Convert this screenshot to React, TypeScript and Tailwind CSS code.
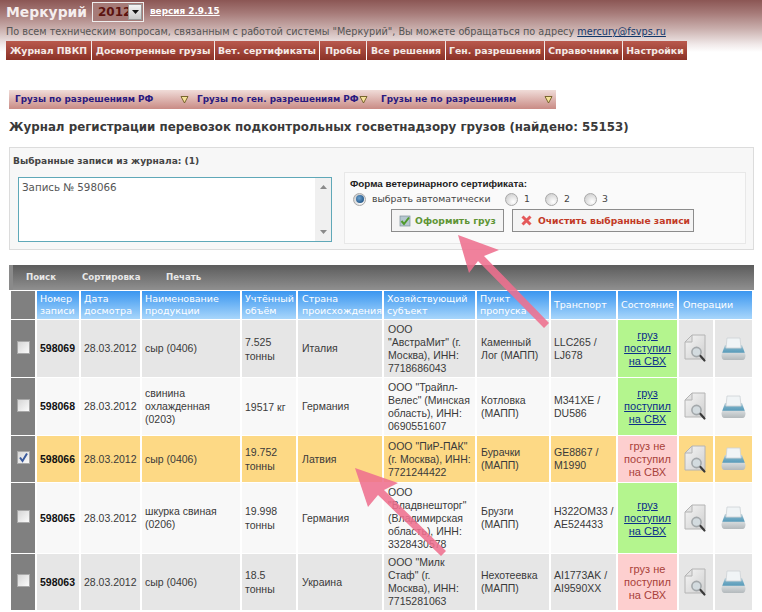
import React from "react";

const VERDANA = "font-['DejaVu_Sans',Verdana,sans-serif]";
const COLS = "grid grid-cols-[24px_42px_59px_98px_54px_84px_91px_72px_65px_59px_34px_37px] gap-x-[2px]";

function DocIcon() {
  return (
    <svg width="24" height="29" viewBox="0 0 24 29">
      <defs>
        <linearGradient id="docg" x1="0" y1="0" x2="1" y2="1">
          <stop offset="0" stopColor="#f6f6f6" />
          <stop offset="1" stopColor="#cfcfcf" />
        </linearGradient>
      </defs>
      <path d="M8 1H21V25H1V8Z" fill="url(#docg)" stroke="#b4b4b4" strokeWidth="1" />
      <path d="M8 1V8H1Z" fill="#e2e2e2" stroke="#b4b4b4" strokeWidth="1" />
      <circle cx="12.5" cy="18" r="4.6" fill="#d3dbdf" stroke="#a3a8ab" strokeWidth="1.6" />
      <path d="M16.5 22L20.5 26.5" stroke="#3a3a3a" strokeWidth="2.2" strokeLinecap="round" />
    </svg>
  );
}

function PrinterIcon() {
  return (
    <svg width="25" height="24" viewBox="0 0 25 24">
      <defs>
        <linearGradient id="prb" x1="0" y1="0" x2="0" y2="1">
          <stop offset="0" stopColor="#c9d6db" />
          <stop offset="0.28" stopColor="#6fa9c3" />
          <stop offset="0.48" stopColor="#5b9dbb" />
          <stop offset="0.56" stopColor="#d3d8da" />
          <stop offset="1" stopColor="#b3b9bc" />
        </linearGradient>
      </defs>
      <path d="M4 8H21L24.5 18Q24.5 23 21.5 23H3.5Q0.5 23 0.5 18Z" fill="url(#prb)" />
      <path d="M6 1H19L20 11H5Z" fill="#f0f4f6" stroke="#cdd2d5" strokeWidth="0.8" />
    </svg>
  );
}

function Check({ checked }: { checked?: boolean }) {
  return (
    <span className="w-[13px] h-[13px] flex items-center justify-center border border-[#a8a8a8] bg-[linear-gradient(135deg,#d6d6d6,#fbfbfb)]">
      {checked && (
        <svg width="11" height="11" viewBox="0 0 11 11">
          <path d="M2 5.5L4.5 9L9 1.5" fill="none" stroke="#3a5a9c" strokeWidth="2" />
        </svg>
      )}
    </span>
  );
}

function Radio({ on }: { on?: boolean }) {
  return (
    <span className="w-[13px] h-[13px] rounded-full border border-[#a9a9a9] bg-[radial-gradient(circle_at_65%_70%,#fff,#c4c4c4)] flex items-center justify-center shrink-0">
      {on && <span className="w-[8px] h-[8px] rounded-full bg-[radial-gradient(circle_at_40%_40%,#6da3cf,#0c3f73)]" />}
    </span>
  );
}

function Down() {
  return (
    <svg width="9" height="9" viewBox="0 0 9 9" className="shrink-0">
      <path d="M1 1.5H8L4.5 8Z" fill="#f6e29a" stroke="#6b5a20" strokeWidth="0.9" />
    </svg>
  );
}

type Row = {
  n: string;
  name: string[];
  vol: string[];
  country: string;
  org: string[];
  point: string[];
  trans: string[];
  ok: boolean;
  h: string;
  bg: string;
  checked?: boolean;
};

const rows: Row[] = [
  { n: "598069", name: ["сыр (0406)"], vol: ["7.525", "тонны"], country: "Италия", org: ["ООО", '"АвстраМит" (г.', "Москва), ИНН:", "7718686043"], point: ["Каменный", "Лог (МАПП)"], trans: ["LLC265 /", "LJ678"], ok: true, h: "h-[57px]", bg: "bg-[#e6e6e6]" },
  { n: "598068", name: ["свинина", "охлажденная", "(0203)"], vol: ["19517 кг"], country: "Германия", org: ['ООО "Трайпл-', 'Велес" (Минская', "область), ИНН:", "0690551607"], point: ["Котловка", "(МАПП)"], trans: ["M341XE /", "DU586"], ok: true, h: "h-[57px]", bg: "bg-[#f8f8f8]" },
  { n: "598066", name: ["сыр (0406)"], vol: ["19.752", "тонны"], country: "Латвия", org: ['ООО "ПиР-ПАК"', "(г. Москва), ИНН:", "7721244422"], point: ["Бурачки", "(МАПП)"], trans: ["GE8867 /", "M1990"], ok: false, h: "h-[46px]", bg: "bg-[#fdd985]", checked: true },
  { n: "598065", name: ["шкурка свиная", "(0206)"], vol: ["19.998", "тонны"], country: "Германия", org: ["ООО", '"Владвнешторг"', "(Владимирская", "область), ИНН:", "3328430578"], point: ["Брузги", "(МАПП)"], trans: ["H322OM33 /", "AE524433"], ok: true, h: "h-[70px]", bg: "bg-[#f8f8f8]" },
  { n: "598063", name: ["сыр (0406)"], vol: ["18.5", "тонны"], country: "Украина", org: ['ООО "Милк', 'Стаф" (г.', "Москва), ИНН:", "7715281063"], point: ["Нехотеевка", "(МАПП)"], trans: ["AI1773AK /", "AI9590XX"], ok: false, h: "h-[56px]", bg: "bg-[#e6e6e6]" },
];

const heads: [string, string?][] = [
  ["Номер", "записи"],
  ["Дата", "досмотра"],
  ["Наименование", "продукции"],
  ["Учтённый", "объём"],
  ["Страна", "происхождения"],
  ["Хозяйствующий", "субъект"],
  ["Пункт", "пропуска"],
  ["Транспорт"],
  ["Состояние"],
];

const navs: [string, string][] = [
  ["Журнал ПВКП", "w-[85px]"],
  ["Досмотренные грузы", "w-[122px]"],
  ["Вет. сертификаты", "w-[104px]"],
  ["Пробы", "w-[46px]"],
  ["Все решения", "w-[78px]"],
  ["Ген. разрешения", "w-[98px]"],
  ["Справочники", "w-[77px]"],
  ["Настройки", "w-[64px]"],
];

function Lines({ items, className }: { items: string[]; className?: string }) {
  return (
    <div className={className}>
      {items.map((t, i) => (
        <div key={i} className="whitespace-nowrap">{t}</div>
      ))}
    </div>
  );
}

export default function App() {
  return (
    <div className="relative w-[762px] h-[612px] overflow-hidden bg-white font-['Liberation_Sans',Arial,sans-serif] text-[#3a3a3a]">
      <div className="bg-[linear-gradient(180deg,#8b5654_0%,#a67a78_25%,#c9aeac_55%,#f0e8e8_85%,#ffffff_100%)] bg-no-repeat bg-[length:100%_52px] pl-[6px]">
        <div className={`h-[24px] flex items-center ${VERDANA}`}>
          <span className="text-[13.9px] font-bold text-[#f5eeee] w-[86px]">Меркурий</span>
          <div className="w-[52px] h-[20px] border border-[#eee] flex items-center pl-[5px] pr-[1px] bg-[#a67b78]">
            <span className="w-[30px] whitespace-nowrap text-[12px] font-bold text-[#5c130f]">2012</span>
            <span className="relative w-[15px] h-[16px] flex items-center justify-center bg-[linear-gradient(180deg,#f4f4f4,#c8c8c8)] border border-[#999]">
              <svg width="7" height="4" viewBox="0 0 7 4"><path d="M0 0H7L3.5 4Z" fill="#111" /></svg>
            </span>
          </div>
          <span className="ml-[6px] text-[8.9px] font-bold text-white underline">версия 2.9.15</span>
        </div>
        <div className={`h-[17px] flex items-center text-[9.7px] text-[#555] whitespace-nowrap ${VERDANA}`}>
          По всем техническим вопросам, связанным с работой системы "Меркурий", Вы можете обращаться по адресу&nbsp;
          <span className="text-[#12386b] underline">mercury@fsvps.ru</span>
        </div>
        <div className={`h-[19px] flex gap-x-[1px] ${VERDANA}`}>
          {navs.map(([t, w]) => (
            <div key={t} className={`${w} h-full flex items-center justify-center text-[9.3px] font-bold text-[#f5ebe8] whitespace-nowrap bg-[linear-gradient(180deg,#b9594d,#8b3227)]`}>{t}</div>
          ))}
        </div>
      </div>

      <div className={`mt-[30px] ml-[9px] w-[547px] h-[19px] flex items-center text-[8.9px] font-bold text-[#2a1a80] bg-[linear-gradient(180deg,#f0dcd8,#c98b85)] ${VERDANA}`}>
        <span className="w-[171px] pl-[6px]">Грузы по разрешениям РФ</span>
        <Down />
        <span className="ml-[8px] w-[162px] whitespace-nowrap">Грузы по ген. разрешениям РФ</span>
        <Down />
        <span className="ml-[13px] w-[163px] whitespace-nowrap">Грузы не по разрешениям</span>
        <Down />
      </div>

      <div className={`mt-[9px] ml-[9px] h-[20px] flex items-center text-[11.85px] font-bold text-[#3a3a3a] whitespace-nowrap ${VERDANA}`}>
        Журнал регистрации перевозок подконтрольных госветнадзору грузов (найдено: 55153)
      </div>

      <div className="mt-[9px] ml-[9px] w-[745px] h-[103px] border border-[#dcdcdc] bg-[#f7f7f7] flex">
        <div className="w-[334px]">
          <div className={`h-[21px] mt-[3px] pl-[3px] flex items-center text-[9.1px] font-bold text-[#444] ${VERDANA}`}>Выбранные записи из журнала: (1)</div>
          <div className="mt-[5px] ml-[8px] w-[314px] h-[65px] border border-[#5fa8b8] bg-white flex justify-between">
            <span className={`pl-[3px] pt-[2px] text-[10.3px] text-[#555] ${VERDANA}`}>Запись № 598066</span>
            <div className="w-[16px] h-full bg-[#f0f0f0] flex flex-col items-center justify-between py-[7px]">
              <svg width="7" height="4" viewBox="0 0 7 4"><path d="M0 4H7L3.5 0Z" fill="#8a8a8a" /></svg>
              <svg width="7" height="4" viewBox="0 0 7 4"><path d="M0 0H7L3.5 4Z" fill="#8a8a8a" /></svg>
            </div>
          </div>
        </div>
        <div className={`mt-[24px] w-[402px] h-[72px] border border-[#e8e8e8] bg-[#fafafa] ${VERDANA}`}>
          <div className="h-[13px] mt-[5px] pl-[5px] flex items-center font-['Liberation_Sans',Arial,sans-serif] text-[9.8px] font-bold text-[#222] whitespace-nowrap">Форма ветеринарного сертификата:</div>
          <div className="h-[16px] pl-[8px] flex items-center text-[9.3px] text-[#444] whitespace-nowrap">
            <Radio on />
            <span className="ml-[6px] w-[133px]">выбрать автоматически</span>
            <Radio />
            <span className="ml-[6px] w-[21px]">1</span>
            <Radio />
            <span className="ml-[6px] w-[20px]">2</span>
            <Radio />
            <span className="ml-[5px]">3</span>
          </div>
          <div className="mt-[2px] pl-[46px] flex gap-x-[8px]">
            <div className="w-[113px] h-[23px] border border-[#8c8c8c] bg-[#f4f4f4] flex items-center justify-center gap-x-[4px] text-[9.2px] font-bold text-[#5f9435] whitespace-nowrap">
              <svg width="12" height="12" viewBox="0 0 12 12">
                <rect x="1" y="1" width="10" height="10" fill="#b5c7cf" stroke="#7d9199" strokeWidth="0.7" />
                <path d="M2.5 6L5 9L10 2.5" fill="none" stroke="#4f9a2a" strokeWidth="2" />
              </svg>
              Оформить груз
            </div>
            <div className="w-[182px] h-[23px] border border-[#8c8c8c] bg-[#f4f4f4] flex items-center pl-[8px] gap-x-[6px] text-[9.2px] font-bold text-[#c23a26] whitespace-nowrap">
              <svg width="11" height="11" viewBox="0 0 11 11">
                <path d="M1.5 1.5L9.5 9.5M9.5 1.5L1.5 9.5" stroke="#e4595a" strokeWidth="3" />
              </svg>
              Очистить выбранные записи
            </div>
          </div>
        </div>
      </div>

      <div className={`mt-[15px] ml-[9px] w-[745px] h-[25px] flex items-center text-[8.6px] font-bold text-[#e8e8e8] bg-[linear-gradient(180deg,#5c5c5c,#8f8f8f)] border-l-[4px] border-l-[#8a8a8a] ${VERDANA}`}>
        <span className="ml-[13px] w-[56px]">Поиск</span>
        <span className="w-[84px]">Сортировка</span>
        <span>Печать</span>
      </div>

      <div className="mt-[1px] ml-[11px] w-[741px]">
        <div className={`${COLS} h-[28px] ${VERDANA}`}>
          <div className="bg-[#808080]" />
          {heads.map(([a, b], i) => (
            <div key={a} className={`flex flex-col justify-center pl-[3px] text-[9.5px] leading-[12px] text-white whitespace-nowrap overflow-hidden bg-[linear-gradient(180deg,#3a96f0,#a8d6fb)] ${i === 4 ? "pl-[4px]" : ""}`}>
              <span>{a}</span>
              {b && <span>{b}</span>}
            </div>
          ))}
          <div className="col-span-2 flex items-center pl-[4px] text-[9.5px] text-white bg-[linear-gradient(180deg,#3a96f0,#a8d6fb)]">Операции</div>
        </div>
        <div className="flex flex-col gap-y-[1px] mt-[1px]">
          {rows.map((r) => (
            <div key={r.n} className={`${COLS} ${r.h} text-[10.5px] leading-[13px]`}>
              <div className="bg-[#808080] flex items-center justify-center pb-[3px]"><Check checked={r.checked} /></div>
              <div className={`${r.bg} flex items-center pl-[3px] font-bold text-[#111]`}>{r.n}</div>
              <div className={`${r.bg} flex items-center pl-[3px]`}>28.03.2012</div>
              <div className={`${r.bg} flex items-center pl-[3px]`}><Lines items={r.name} /></div>
              <div className={`${r.bg} flex items-center pl-[3px]`}><Lines items={r.vol} className="leading-[14px]" /></div>
              <div className={`${r.bg} flex items-center pl-[4px]`}>{r.country}</div>
              <div className={`${r.bg} flex items-center pl-[4px]`}><Lines items={r.org} /></div>
              <div className={`${r.bg} flex items-center pl-[4px]`}><Lines items={r.point} /></div>
              <div className={`${r.bg} flex items-center pl-[3px]`}><Lines items={r.trans} /></div>
              {r.ok ? (
                <div className="bg-[#b4f58e] flex flex-col items-center justify-center text-[11px] text-[#0b2f8a] underline">
                  <span>груз</span><span>поступил</span><span>на СВХ</span>
                </div>
              ) : (
                <div className="bg-[#fdcfcf] flex flex-col items-center justify-center text-[11px] text-[#a8413a]">
                  <span>груз не</span><span>поступил</span><span>на СВХ</span>
                </div>
              )}
              <div className={`${r.bg} flex items-center justify-center`}><DocIcon /></div>
              <div className={`${r.bg} flex items-center justify-center`}><PrinterIcon /></div>
            </div>
          ))}
        </div>
      </div>

      <svg className="absolute left-0 top-0 pointer-events-none" width="762" height="612" viewBox="0 0 762 612">
        <g fill="#ee6f8e" fillOpacity="0.88">
          <path d="M458 235L499 250L484 256L549 323L544 328L478 261L469 273Z" />
          <path d="M355 468L398 483L384 490L446 551L441 556L378 495L368 507Z" />
        </g>
      </svg>
    </div>
  );
}
